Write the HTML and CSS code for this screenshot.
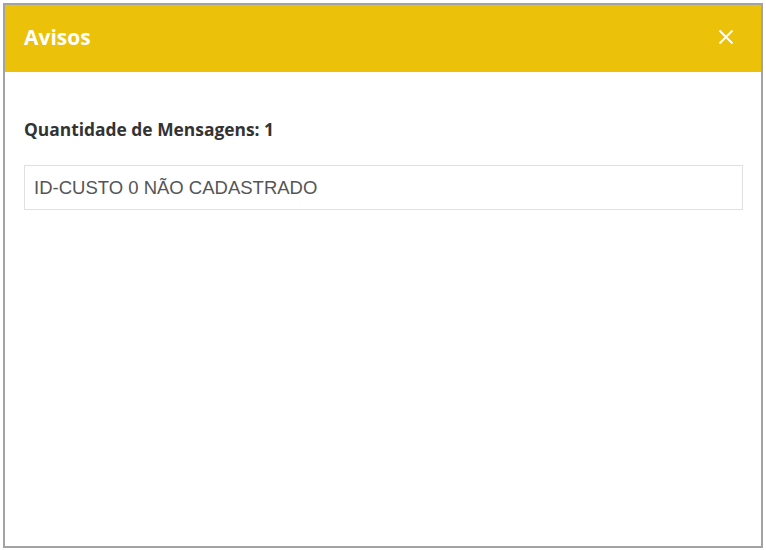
FILE: index.html
```html
<!DOCTYPE html>
<html lang="pt">
<head>
  <meta charset="UTF-8" />
  <title>Avisos</title>
  <link rel="stylesheet" href="styles.css">
</head>
<body>

<div class="modal">
  <header class="modal-header">
    <h2>Avisos</h2>
    <button class="close" aria-label="Fechar">
      <svg width="16" height="16" viewBox="0 0 16 16">
        <path d="M1.5 1.5 L14.5 14.5 M14.5 1.5 L1.5 14.5" stroke="#fff" stroke-width="2" fill="none" />
      </svg>
    </button>
  </header>

  <div class="modal-body">
    <p class="count">Quantidade de Mensagens: 1</p>
    <div class="message">ID-CUSTO 0 NÃO CADASTRADO</div>
  </div>
</div>

</body>
</html>
```

FILE: styles.css
```css
body {
  margin: 0;
  padding: 3px 3px 0 3px;
  background: #fff;
  font-family: 'Open Sans', 'Segoe UI', sans-serif;
}
.modal {
  box-sizing: border-box;
  height: 545px;
  border: 2px solid #a3a3a3;
  background: white;
  display: flex;
  flex-direction: column;
}
.modal-header {
  box-sizing: border-box;
  background: #ebc10a;
  height: 67px;
  display: flex;
  align-items: center;
  justify-content: space-between;
  padding: 0 27px 3px 19px;
}
.modal-header h2 {
  margin: 0;
  color: white;
  font-size: 21px;
  font-weight: bold;
}
.close {
  background: none;
  border: none;
  padding: 0;
  cursor: pointer;
  display: flex;
}
.modal-body {
  padding: 45px 18px 0 19px;
}
.count {
  margin: 0 0 24px;
  font-size: 17.4px;
  line-height: 24px;
  font-weight: bold;
  color: #333;
}
.message {
  box-sizing: border-box;
  border: 1px solid #e0e0e0;
  height: 45px;
  display: flex;
  align-items: center;
  padding: 0 9px;
  font-family: 'Liberation Sans', Arial, sans-serif;
  font-size: 18.5px;
  color: #555;
}
```
